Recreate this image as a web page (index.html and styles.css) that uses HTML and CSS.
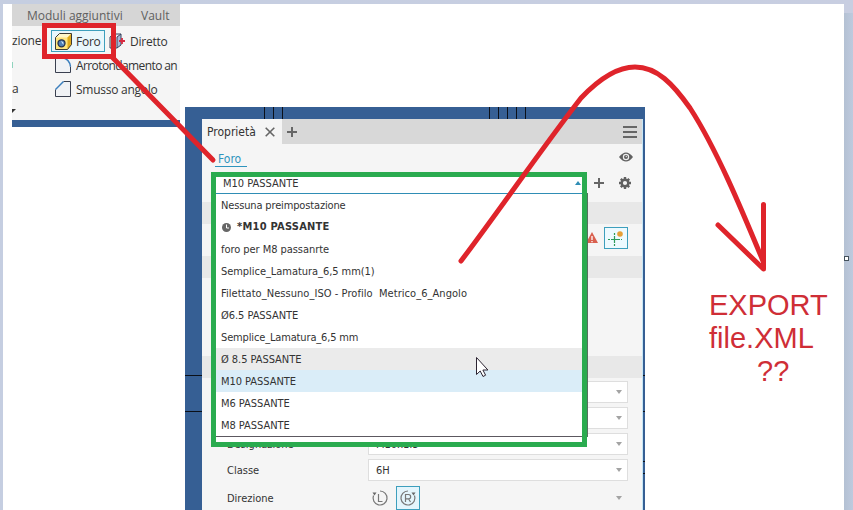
FILE: index.html
```html
<!DOCTYPE html>
<html lang="it">
<head>
    <meta charset="UTF-8">
    <meta name="viewport" content="width=device-width, initial-scale=1.0">
    <title>Foro - Proprietà</title>
    <link rel="stylesheet" href="styles.css">
</head>
<body>
    <div class="paper">
        <div class="ribbon">
            <div class="ribbon-tabs">
                <span class="tab-addins">Moduli aggiuntivi</span>
                <span class="tab-vault">Vault</span>
            </div>
            <div class="ribbon-body">
                <div class="ribbon-left">
                    <span class="cut">zione</span>
                    <span class="tick"></span>
                    <span>a</span>
                    <svg width="5" height="4"><path d="M0 0h4L0 4z" fill="#333"/></svg>
                </div>
                <div class="ribbon-tools">
                    <div class="tool-row">
                        <div class="tool active">
                            <svg width="17" height="17" viewBox="0 0 17 17">
                                <path d="M.5 4.500l4-4h12v11l-4 5H.5z" fill="#ffe57c"/>
                                <path d="M.5 4.500l4-4h12l-4 4z" fill="#fff6c8"/>
                                <path d="M12.500 4.500l4-4v11l-4 5z" fill="#e0aa1c"/>
                                <path d="M.5 4.500l4-4h12v11l-4 5H.5z" fill="none" stroke="#3c3a35"/>
                                <circle cx="6.500" cy="10.300" r="3.500" fill="#4f80b8" stroke="#26304d" stroke-width="1.300"/>
                                <path d="M6 8.300a2.500 2.500 0 0 1 2.300 3.500z" fill="#e2f0ff"/>
                            </svg>
                            <span>Foro</span>
                        </div>
                        <div class="tool direct">
                            <svg width="16" height="16" viewBox="0 0 16 16">
                                <path d="M1 4l4-3h7v11l-4 3H1z" fill="#e6eaf2"/>
                                <path d="M1.500 4.500h5v10h-5z" fill="#f4d9a0"/>
                                <path d="M8 4l4-3v11l-4 3z" fill="#a9b9d6"/>
                                <path d="M1 4l4-3h7v11l-4 3H1zM8 15V4l4-3" fill="none" stroke="#39435c"/>
                                <path d="M10 8h6M13 5v6" stroke="#d72a40" stroke-width="1.800"/>
                            </svg>
                            <span>Diretto</span>
                        </div>
                    </div>
                    <div class="tool fillet">
                        <svg width="17" height="17" viewBox="0 0 17 17">
                            <path d="M.5.500h7q8 1 8.500 9v6H.5z" fill="#f0f2f5"/>
                            <path d="M7 .5H.5v15h15v-6" fill="none" stroke="#3a4050"/>
                            <path d="M7 .7q7.500 1 8.500 9" fill="none" stroke="#3b7fbd" stroke-width="1.500"/>
                        </svg>
                        <span>Arrotondamento an</span>
                    </div>
                    <div class="tool">
                        <svg width="17" height="17" viewBox="0 0 17 17">
                            <path d="M.5 8.500l8-8h7v15H.5z" fill="#f0f2f5"/>
                            <path d="M8.500.500h7v15H.5v-7" fill="none" stroke="#3a4050"/>
                            <path d="M.5 8.500l8-8" stroke="#3b7fbd" stroke-width="1.500"/>
                        </svg>
                        <span>Smusso angolo</span>
                    </div>
                </div>
            </div>
        </div>

        <div class="viewport">
            <svg class="edges" width="460" height="403" viewBox="0 0 460 403">
                <path d="M79.500 0v12M88.500 0v12M97.500 0v12M304.500 0v12M313.500 0v12M322.500 0v12M331.500 0v12M340.500 0v12M0 268.500h17M0 304.500h17M458 268.500h2M458 304.500h2M458 354.500h2M458 366.500h2" stroke="#0b1018" fill="none"/>
            </svg>
            <div class="panel">
                <div class="panel-tabs">
                    <div class="panel-tab">
                        <span>Proprietà</span>
                        <svg width="10" height="10" viewBox="0 0 10 10"><path d="M.7.700l8.600 8.600M9.300.700L.7 9.300" stroke="#666" stroke-width="1.600"/></svg>
                    </div>
                    <svg class="add-tab" width="10" height="10" viewBox="0 0 10 10"><path d="M0 5h10M5 0v10" stroke="#666" stroke-width="2"/></svg>
                    <svg class="menu" width="14" height="12" viewBox="0 0 14 12"><path d="M0 1h14M0 6h14M0 11h14" stroke="#666" stroke-width="2"/></svg>
                </div>
                <div class="crumb">
                    <span>Foro</span>
                    <svg width="14" height="10" viewBox="0 0 14 10">
                        <path d="M0 5q7-9 14 0-7 9-14 0z" fill="#606060"/>
                        <circle cx="7" cy="5" r="3.200" fill="#eee"/>
                        <circle cx="7" cy="5" r="2" fill="#606060"/>
                        <circle cx="7.300" cy="4.500" r=".7" fill="#ddd"/>
                    </svg>
                </div>
                <div class="preset-tools">
                    <svg width="10" height="10" viewBox="0 0 10 10"><path d="M0 5h10M5 0v10" stroke="#666" stroke-width="2"/></svg>
                    <svg width="12" height="12" viewBox="0 0 12 12">
                        <path d="M6 0v12M0 6h12M1.800 1.800l8.400 8.400M10.200 1.800l-8.400 8.400" stroke="#606060" stroke-width="2.400"/>
                        <circle cx="6" cy="6" r="3.300" fill="#f5f5f5" stroke="#606060" stroke-width="2.400"/>
                    </svg>
                </div>
                <div class="band"></div>
                <div class="input-row">
                    <svg width="12" height="12" viewBox="0 0 12 12"><path d="M6 0l6 11H0z" fill="#d9604f"/><path d="M6 4v4M6 9v1.300" stroke="#fff" stroke-width="1.300"/></svg>
                    <div class="toggle">
                        <svg width="20" height="18" viewBox="0 0 20 18">
                            <path d="M2 10.500h2M5 10.500h9M15 10.500h1M8.500 4v2M8.500 7v7M8.500 15v2" stroke="#2c9b59" stroke-width="1.200"/>
                            <circle cx="14" cy="5" r="2.800" fill="#e6a037"/>
                        </svg>
                    </div>
                </div>
                <div class="band"></div>
                <div class="blank"></div>
                <div class="band"></div>
                <div class="fields">
                    <div class="field"><label></label><div class="select"><span></span><i></i></div></div>
                    <div class="field"><label></label><div class="select"><span></span><i></i></div></div>
                    <div class="field"><label>Designazione</label><div class="select"><span>M10x1.5</span><i></i></div></div>
                    <div class="field"><label>Classe</label><div class="select"><span>6H</span><i></i></div></div>
                    <div class="field direction">
                        <label>Direzione</label>
                        <div class="hands">
                            <svg width="18" height="18" viewBox="0 0 18 18">
                                <path d="M9 2a7 7 0 1 1-6.500 4.500" fill="none" stroke="#777" stroke-width="1.200"/>
                                <path d="M1.500 3.500h4l-2 3z" fill="#666"/>
                                <path d="M7.500 5v7.500h4" fill="none" stroke="#777" stroke-width="1.200"/>
                            </svg>
                            <div class="hand-on">
                                <svg width="18" height="18" viewBox="0 0 18 18">
                                    <path d="M9 2a7 7 0 1 0 6.500 4.500" fill="none" stroke="#777" stroke-width="1.200"/>
                                    <path d="M16.500 3.500h-4l2 3z" fill="#666"/>
                                    <path d="M6.500 13V5.500h3a2 2 0 0 1 0 4.300h-3M9.500 9.800l2 3.200" fill="none" stroke="#777" stroke-width="1.200"/>
                                </svg>
                            </div>
                            <i></i>
                        </div>
                    </div>
                </div>
            </div>

            <div class="dropdown">
                <div class="combo"><span>M10 PASSANTE</span><i></i></div>
                <ul class="list">
                    <li class="tight">Nessuna preimpostazione</li>
                    <li class="recent">
                        <svg width="9" height="9" viewBox="0 0 9 9"><circle cx="4.500" cy="4.500" r="4.500" fill="#666"/><path d="M4.500 1.500v3.500H7" fill="none" stroke="#fff"/></svg>
                        <span>*M10 PASSANTE</span>
                    </li>
                    <li>foro per M8 passanrte</li>
                    <li>Semplice_Lamatura_6,5 mm(1)</li>
                    <li class="wide">Filettato_Nessuno_ISO - Profilo&nbsp; Metrico_6_Angolo</li>
                    <li>Ø6.5 PASSANTE</li>
                    <li class="tight">Semplice_Lamatura_6,5 mm</li>
                    <li class="hover">Ø 8.5 PASSANTE</li>
                    <li class="selected">M10 PASSANTE</li>
                    <li>M6 PASSANTE</li>
                    <li>M8 PASSANTE</li>
                </ul>
            </div>
        </div>

        <div class="note">
            <div>EXPORT</div>
            <div>file.XML</div>
            <div class="marks">??</div>
        </div>
    </div>

    <div class="handle"></div>

    <!-- red pen strokes and mouse cursor -->
    <svg class="ink" width="853" height="510" viewBox="0 0 853 510">
        <g fill="none" stroke="#df242b" stroke-width="5" stroke-linecap="round" stroke-linejoin="round">
            <rect x="44.500" y="25.500" width="69" height="31" stroke-linejoin="miter"/>
            <path d="M112 57L213 160"/>
            <path d="M461 261C506 201 540 151 581 98C600 78 617 67 635 67C657 67 673 84 690 108C716 148 741 208 763 261"/>
            <path d="M763.500 204.500V269L718 225"/>
        </g>
        <path d="M476.500 357.500v17l3.700-3.500 2.800 5.500 2.600-1.300-2.700-5.200h5z" fill="#fff" stroke="#2c2432"/>
    </svg>
</body>
</html>
```
FILE: styles.css
```css
* {
    box-sizing: border-box;
}
body {
    margin: 0;
    width: 853px;
    height: 510px;
    overflow: hidden;
    position: relative;
    padding: 4px 0 0 3px;
    background: linear-gradient(90deg, #c5cee1, #c8cee1);
    font-family: "DejaVu Sans Condensed", "DejaVu Sans", sans-serif;
    font-stretch: condensed;
    font-size: 11px;
    color: #333;
}
body::after {
    content: "";
    position: absolute;
    left: 844px;
    top: 13px;
    width: 9px;
    height: 497px;
    background: linear-gradient(90deg, #b4c1d3, #becade);
}
svg {
    display: block;
    flex: none;
}
.paper {
    display: flex;
    align-items: flex-start;
    width: 841px;
    height: 506px;
    background: #fff;
}

/* ribbon */
.ribbon {
    width: 168px;
    height: 123px;
    margin-left: 9px;
    flex: none;
    overflow: hidden;
    background: #f5f5f5;
    border-bottom: 7px solid #365f94;
    font-family: "Open Sans", "Noto Sans", sans-serif;
    font-stretch: normal;
    font-size: 12px;
    letter-spacing: -0.25px;
    white-space: nowrap;
}
.ribbon-tabs {
    display: flex;
    height: 22px;
    padding-left: 15px;
    line-height: 23px;
    letter-spacing: 0;
    background: #d6d6d6;
    color: #606060;
}
.tab-addins {
    width: 114px;
}
.ribbon-body {
    display: flex;
}
.ribbon-left {
    width: 39px;
    height: 94px;
    padding-top: 3px;
    line-height: 24px;
    flex: none;
    display: flex;
    flex-direction: column;
}
.ribbon-left .cut {
    letter-spacing: -0.1px;
}
.ribbon-left .tick {
    width: 1px;
    height: 6px;
    margin: 9px 0;
    background: #8fd3bd;
}
.ribbon-left svg {
    margin-top: 8px;
}
.ribbon-tools {
    flex: none;
    padding-top: 3px;
}
.tool-row {
    display: flex;
}
.tool {
    display: flex;
    align-items: center;
    gap: 4px;
    height: 24px;
    padding-left: 4px;
}
.tool.active {
    width: 54px;
    height: 22px;
    margin-top: 1px;
    margin-bottom: 1px;
    padding-left: 3px;
    border: 1px solid #3d9fbd;
    background: #e9f7fc;
}
.tool.direct {
    gap: 5px;
}
.tool.fillet {
    letter-spacing: -0.6px;
}

/* modelling window with property panel */
.viewport {
    position: relative;
    width: 460px;
    height: 403px;
    margin: 103px 0 0 5px;
    padding: 12px 2px 0 17px;
    flex: none;
    background: #365f94;
}
.edges {
    position: absolute;
    left: 0;
    top: 0;
}
.panel {
    height: 391px;
    background: #f5f5f5;
    border-right: 1px solid #c5e6f5;
    overflow: hidden;
}
.panel-tabs {
    display: flex;
    align-items: center;
    height: 25px;
    background: #d8d8d8;
}
.panel-tab {
    display: flex;
    align-items: center;
    justify-content: space-between;
    width: 80px;
    height: 25px;
    padding: 0 7px 0 5px;
    background: #f5f5f5;
    font-size: 12px;
}
.add-tab {
    margin-left: 5px;
}
.menu {
    margin-left: auto;
    margin-right: 5px;
}
.crumb {
    display: flex;
    justify-content: space-between;
    height: 28px;
    padding: 8px 9px 0 13px;
}
.crumb span {
    height: 15px;
    width: 32px;
    padding-left: 3px;
    line-height: 14px;
    border-bottom: 1px solid #2f94bd;
    color: #2f94bd;
    font-size: 12px;
}
.preset-tools {
    display: flex;
    justify-content: flex-end;
    align-items: center;
    gap: 15px;
    height: 30px;
    padding: 0 11px 8px 0;
}
.band {
    height: 22px;
    background: #e8e8e8;
}
.input-row {
    display: flex;
    justify-content: flex-end;
    align-items: center;
    gap: 6px;
    height: 32px;
    padding: 0 14px 4px 0;
}
.toggle {
    width: 24px;
    height: 22px;
    padding: 1px;
    border: 1px solid #3d9fbd;
    background: #edfaff;
}
.blank {
    height: 78px;
}
.fields {
    display: grid;
    row-gap: 4px;
    padding: 3px 14px 0 25px;
}
.field {
    display: flex;
    align-items: center;
    height: 22px;
}
.field label {
    width: 141px;
}
.select {
    display: flex;
    flex: 1;
    align-items: center;
    justify-content: space-between;
    height: 22px;
    padding: 0 5px 0 7px;
    border: 1px solid #dedede;
    background: #fff;
}
.field i {
    border: 3px solid transparent;
    border-top: 4px solid #a3a3a3;
    border-bottom: 0;
}
.direction {
    height: 26px;
}
.hands {
    display: flex;
    flex: 1;
    align-items: center;
    padding: 0 6px 0 3px;
}
.hand-on {
    width: 24px;
    height: 24px;
    margin-left: 7px;
    padding: 2px;
    border: 1px solid #3d9fbd;
    background: #e4f5fc;
}
.hands i {
    margin-left: auto;
}

/* open preset list, lies over the panel */
.dropdown {
    position: absolute;
    left: 26px;
    top: 65px;
    width: 376px;
    height: 275px;
    border: 5px solid #2aab4f;
    background: #fff;
}
.dropdown::after {
    content: "";
    position: absolute;
    left: 371px;
    top: 16px;
    width: 1px;
    height: 244px;
    background: #56705f;
}
.combo {
    display: flex;
    align-items: center;
    justify-content: space-between;
    height: 17px;
    padding: 0 1px 4px 7px;
    border-bottom: 1px solid #2f8db5;
}
.combo i {
    border: 3px solid transparent;
    border-bottom: 4px solid #2f8db5;
    border-top: 0;
}
.list {
    margin: 0;
    padding: 0;
    list-style: none;
    border-bottom: 1px solid #5c5860;
}
.list li {
    height: 22px;
    padding-left: 5px;
    line-height: 24px;
    letter-spacing: -0.05px;
    white-space: pre;
}
.list .tight {
    letter-spacing: -0.15px;
}
.list .wide {
    letter-spacing: 0.05px;
}
.list .recent {
    display: flex;
    align-items: center;
    gap: 6px;
    padding-left: 6px;
    line-height: 20px;
    font-weight: bold;
    letter-spacing: 0.25px;
}
.list .hover {
    background: #ebebeb;
}
.list .selected {
    background: #daedf8;
}

.note {
    margin: 285px 0 0 64px;
    font: 29px/33px "Liberation Sans", Arial, sans-serif;
    color: #cf2e36;
}
.note .marks {
    padding-left: 48px;
}
.handle {
    position: absolute;
    z-index: 1;
    left: 844px;
    top: 256px;
    width: 5px;
    height: 5px;
    border: 1px solid #44515c;
    background: #fff;
}
.ink {
    position: absolute;
    left: 0;
    top: 0;
}
```
